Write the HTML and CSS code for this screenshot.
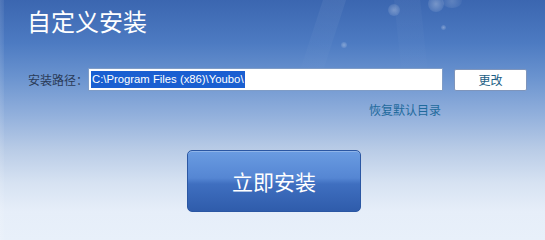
FILE: index.html
```html
<!DOCTYPE html>
<html lang="zh-CN">
<head>
<meta charset="utf-8">
<title>自定义安装</title>
<link rel="stylesheet" href="styles.css">
</head>
<body>
<div class="page">
  <div class="edge"></div>
  <div class="glow g1"></div>
  <div class="glow g2"></div>
  <div class="glow g3"></div>
  <div class="glow g4"></div>
  <div class="glow g5"></div>
  <div class="ray r1"></div>
  <div class="ray r2"></div>
  <h1 class="title">自定义安装</h1>
  <div class="path-row">
    <span class="label">安装路径：</span>
    <div class="path-input"><span class="sel">C:\Program Files (x86)\Youbo\</span></div>
    <button class="change-btn">更改</button>
  </div>
  <div class="link-row"><a class="reset-link">恢复默认目录</a></div>
  <div class="install-row"><button class="install-btn">立即安装</button></div>
</div>
</body>
</html>
```
FILE: styles.css
```css
html, body {
  margin: 0;
  padding: 0;
}
body {
  width: 545px;
  height: 240px;
  overflow: hidden;
  font-family: "Noto Sans CJK SC", "Liberation Sans", sans-serif;
}
.page {
  position: relative;
  width: 545px;
  height: 240px;
  overflow: hidden;
  background: linear-gradient(180deg, #3b66b0 0%, #4d7bc2 18%, #6a93cf 32%, #92b0dc 48%, #b8cbe6 62%, #d6e2f2 76%, #e6eef9 88%, #e8f0fa 100%);
  display: flex;
  flex-direction: column;
}
.edge {
  position: absolute;
  left: 0; top: 0; bottom: 0;
  width: 4px;
  background: linear-gradient(90deg, rgba(255,255,255,0.12), rgba(255,255,255,0.05));
}
.glow {
  position: absolute;
  border-radius: 50%;
  background: radial-gradient(circle, rgba(255,255,255,0.3) 0%, rgba(255,255,255,0.12) 60%, rgba(255,255,255,0) 100%);
}
.g1 { left: 428px; top: -4px; width: 16px; height: 16px; }
.g2 { left: 388px; top: 4px; width: 12px; height: 12px; }
.g3 { left: 442px; top: -6px; width: 20px; height: 14px; opacity: 0.6; }
.g4 { left: 341px; top: 42px; width: 6px; height: 6px; }
.g5 { left: 441px; top: 25px; width: 5px; height: 5px; }
.ray {
  position: absolute;
  top: -20px;
  height: 110px;
  background: linear-gradient(180deg, rgba(255,255,255,0.07), rgba(255,255,255,0));
  transform-origin: top center;
}
.r1 { left: 330px; width: 22px; transform: rotate(18deg); }
.r2 { left: 392px; width: 26px; transform: rotate(-6deg); opacity: 0.6; }

.title {
  position: relative;
  margin: 0;
  padding: 6px 0 0 27px;
  height: 30px;
  font-size: 24px;
  line-height: 30px;
  font-weight: normal;
  color: #ffffff;
}
.path-row {
  position: relative;
  display: flex;
  align-items: center;
  margin-top: 32px;
  padding-left: 28px;
  height: 23px;
}
.label {
  width: 60px;
  font-size: 12px;
  color: #2a3b58;
  line-height: 23px;
}
.path-input {
  box-sizing: border-box;
  width: 355px;
  height: 23px;
  background: #ffffff;
  border: 1px solid #7f9cc6;
  padding: 2px 2px;
  display: flex;
  align-items: center;
  font-family: "Liberation Sans", sans-serif;
  font-size: 11.3px;
}
.sel {
  background: #1a5fd1;
  color: #ffffff;
  line-height: 17px;
  padding: 0 1px;
}
.change-btn {
  box-sizing: border-box;
  margin-left: 11px;
  width: 73px;
  height: 22px;
  background: #ffffff;
  border: 1px solid #7f95bb;
  border-radius: 2px;
  font-family: "Noto Sans CJK SC", sans-serif;
  font-size: 12px;
  color: #1d5f86;
  padding: 0;
}
.link-row {
  position: relative;
  display: flex;
  padding-left: 369px;
  margin-top: 11px;
  height: 16px;
}
.reset-link {
  font-size: 12px;
  line-height: 16px;
  color: #1f6a9c;
}
.install-row {
  position: relative;
  display: flex;
  padding-left: 187px;
  margin-top: 32px;
}
.install-btn {
  box-sizing: border-box;
  width: 174px;
  height: 62px;
  border: 1px solid #2b57a3;
  border-radius: 5px;
  background: linear-gradient(180deg, #6a9ce2 0%, #5586d3 45%, #3f6fc0 55%, #2f5cab 100%);
  color: #ffffff;
  font-family: "Noto Sans CJK SC", sans-serif;
  font-size: 21px;
  padding: 0;
  box-shadow: inset 0 1px 0 rgba(255,255,255,0.25);
}
```
